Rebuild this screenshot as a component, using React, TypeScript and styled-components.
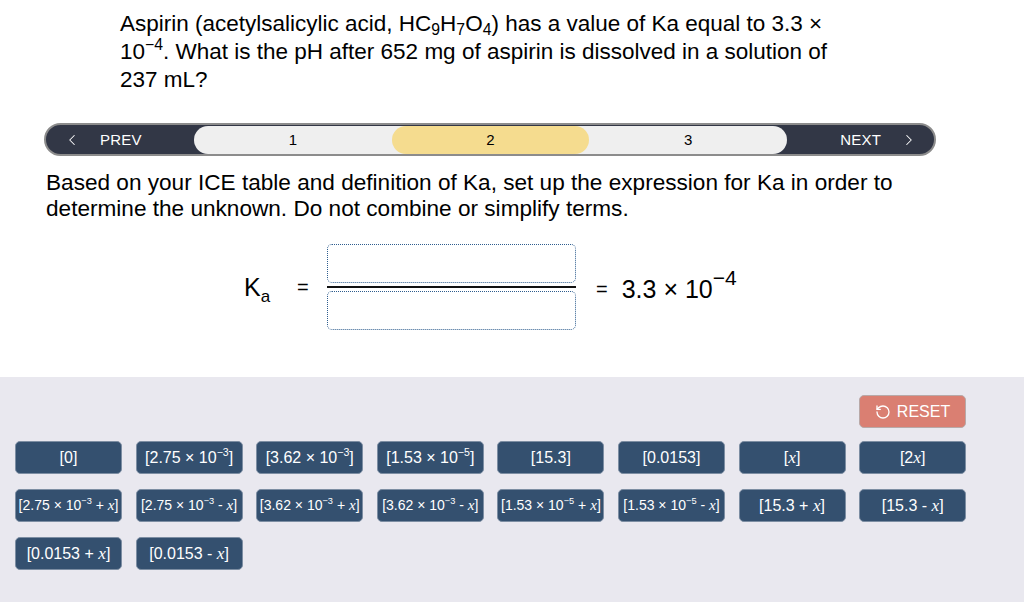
import React from "react";
import styled, { createGlobalStyle } from "styled-components";
import { ChevronLeft, ChevronRight, RotateCcw } from "lucide-react";

const Global = createGlobalStyle`
  html, body { margin: 0; padding: 0; background: #fff; }
  body { font-family: "Liberation Sans", Arial, sans-serif; color: #000; }
  #root { min-height: 602px; }
`;

const Page = styled.div`
  width: 1024px;
  height: 602px;
  display: flex;
  flex-direction: column;
  overflow: hidden;
`;

const Top = styled.div`
  flex: 0 0 377px;
  display: flex;
  flex-direction: column;
`;

const Question = styled.div`
  margin: 10px 0 0 120px;
  width: 722px;
  font-size: 22.5px;
  line-height: 28px;
`;

const Sub = styled.sub`
  font-size: 0.7em;
  vertical-align: -0.25em;
  line-height: 0;
`;

const Sup = styled.sup<{ $size?: number; $raise?: number }>`
  font-size: ${(p) => (p.$size ? `${p.$size}em` : "0.7em")};
  vertical-align: ${(p) => (p.$raise ? `${p.$raise}em` : "0.6em")};
  line-height: 0;
`;

const NavBar = styled.div`
  margin: 29px 0 0 44px;
  width: 892px;
  height: 33px;
  box-sizing: border-box;
  border: 2px solid #8c8c8c;
  border-radius: 17px;
  background: #323746;
  display: flex;
  align-items: center;
  color: #fff;
  font-family: "Liberation Sans", Arial, sans-serif;
  font-size: 15px;
`;

const NavButton = styled.div<{ $side: "prev" | "next" }>`
  flex: 0 0 ${(p) => (p.$side === "prev" ? 148 : 147)}px;
  display: flex;
  align-items: center;
  justify-content: ${(p) => (p.$side === "prev" ? "flex-start" : "flex-end")};
  gap: 19px;
  padding: ${(p) => (p.$side === "prev" ? "0 0 0 17px" : "0 16px 0 0")};
  box-sizing: border-box;
  letter-spacing: 0.2px;
`;

const Track = styled.div`
  flex: 0 0 593px;
  height: 28px;
  border-radius: 14px;
  background: #efefef;
  display: flex;
`;

const Step = styled.div<{ $active?: boolean }>`
  flex: 1;
  display: flex;
  align-items: center;
  justify-content: center;
  border-radius: 14px;
  background: ${(p) => (p.$active ? "#f5dc8f" : "transparent")};
  color: #000;
  font-size: 15px;
`;

const Instruction = styled.div`
  margin: 14px 0 0 46px;
  width: 900px;
  font-size: 22.6px;
  line-height: 26px;
`;

const Equation = styled.div`
  margin: 22px 0 0 244px;
  display: flex;
  align-items: center;
`;

const KLabel = styled.span`
  font-size: 25px;
  width: 53px;
`;

const KSub = styled.sub`
  font-size: 17px;
  vertical-align: -0.35em;
  line-height: 0;
`;

const Eq = styled.span`
  width: 30px;
  font-size: 20px;
`;

const Fraction = styled.div`
  display: flex;
  flex-direction: column;
  align-items: stretch;
  width: 249px;
  gap: 3px;
`;

const DropBox = styled.div`
  height: 39px;
  box-sizing: border-box;
  border: 1px dotted #2e5d8e;
  border-radius: 5px;
`;

const Bar = styled.div`
  height: 2px;
  background: #111;
`;

const Result = styled.span`
  margin-left: 20px;
  font-size: 25px;
  display: flex;
  align-items: center;
  gap: 14px;
  padding-top: 4px;
`;

const ResultEq = styled.span`
  font-size: 20px;
`;

const Panel = styled.div`
  flex: 1;
  background: #e9e8ef;
  padding: 18px 0 0 15px;
  display: flex;
  flex-direction: column;
`;

const ResetRow = styled.div`
  width: 951px;
  display: flex;
  justify-content: flex-end;
  margin-bottom: 13px;
`;

const ResetButton = styled.button`
  width: 107px;
  height: 33px;
  box-sizing: border-box;
  border: 1px solid #b8a9a8;
  border-radius: 5px;
  background: #da7f72;
  color: #fff;
  font-family: "Liberation Sans", Arial, sans-serif;
  font-size: 16px;
  display: flex;
  align-items: center;
  justify-content: center;
  gap: 6px;
  padding: 0;
`;

const Grid = styled.div`
  display: grid;
  grid-template-columns: repeat(8, 107px);
  column-gap: 13.6px;
  row-gap: 15px;
`;

const Tile = styled.button<{ $size: number }>`
  height: 33px;
  box-sizing: border-box;
  border: 1px solid #7d8ea3;
  border-radius: 5px;
  background: #34506f;
  color: #fff;
  font-family: "Liberation Sans", Arial, sans-serif;
  font-size: ${(p) => p.$size}px;
  display: flex;
  align-items: center;
  justify-content: center;
  padding: 0;
  white-space: nowrap;
`;

const TileText = styled.span`
  white-space: pre;
`;

const X = styled.i`
  font-family: "Liberation Serif", "Times New Roman", serif;
  font-style: italic;
  font-size: 1.08em;
`;

type T = { content: React.ReactNode; size: number };

const sci = (m: string, e: string) => (
  <>
    {m} × 10<Sup $size={0.66} $raise={0.7}>{e}</Sup>
  </>
);

const tiles: T[] = [
  { content: <>[0]</>, size: 16 },
  { content: <>[{sci("2.75", "−3")}]</>, size: 16 },
  { content: <>[{sci("3.62", "−3")}]</>, size: 16 },
  { content: <>[{sci("1.53", "−5")}]</>, size: 16 },
  { content: <>[15.3]</>, size: 16 },
  { content: <>[0.0153]</>, size: 16 },
  { content: <>[<X>x</X>]</>, size: 16 },
  { content: <>[2<X>x</X>]</>, size: 16 },
  { content: <>[{sci("2.75", "−3")}{" + "}<X>x</X>]</>, size: 14 },
  { content: <>[{sci("2.75", "−3")}{" - "}<X>x</X>]</>, size: 14 },
  { content: <>[{sci("3.62", "−3")}{" + "}<X>x</X>]</>, size: 14 },
  { content: <>[{sci("3.62", "−3")}{" - "}<X>x</X>]</>, size: 14 },
  { content: <>[{sci("1.53", "−5")}{" + "}<X>x</X>]</>, size: 14 },
  { content: <>[{sci("1.53", "−5")}{" - "}<X>x</X>]</>, size: 14 },
  { content: <>[15.3{" + "}<X>x</X>]</>, size: 16 },
  { content: <>[15.3{" - "}<X>x</X>]</>, size: 16 },
  { content: <>[0.0153{" + "}<X>x</X>]</>, size: 16 },
  { content: <>[0.0153{" - "}<X>x</X>]</>, size: 16 },
];

export default function App() {
  return (
    <>
      <Global />
      <Page>
        <Top>
          <Question>
            Aspirin (acetylsalicylic acid, HC<Sub>9</Sub>H<Sub>7</Sub>O<Sub>4</Sub>) has a value of Ka equal to 3.3 ×
            10<Sup>−4</Sup>. What is the pH after 652 mg of aspirin is dissolved in a solution of 237 mL?
          </Question>
          <NavBar>
            <NavButton $side="prev">
              <ChevronLeft size={18} strokeWidth={1.4} />
              <span>PREV</span>
            </NavButton>
            <Track>
              <Step>1</Step>
              <Step $active>2</Step>
              <Step>3</Step>
            </Track>
            <NavButton $side="next">
              <span>NEXT</span>
              <ChevronRight size={18} strokeWidth={1.4} />
            </NavButton>
          </NavBar>
          <Instruction>
            Based on your ICE table and definition of Ka, set up the expression for Ka in order to determine the
            unknown. Do not combine or simplify terms.
          </Instruction>
          <Equation>
            <KLabel>
              K<KSub>a</KSub>
            </KLabel>
            <Eq>=</Eq>
            <Fraction>
              <DropBox />
              <Bar />
              <DropBox />
            </Fraction>
            <Result>
              <ResultEq>=</ResultEq>
              <span>
                3.3 × 10<Sup $size={0.84} $raise={0.6}>−4</Sup>
              </span>
            </Result>
          </Equation>
        </Top>
        <Panel>
          <ResetRow>
            <ResetButton>
              <RotateCcw size={16} strokeWidth={2} />
              RESET
            </ResetButton>
          </ResetRow>
          <Grid>
            {tiles.map((t, i) => (
              <Tile key={i} $size={t.size}>
                <TileText>{t.content}</TileText>
              </Tile>
            ))}
          </Grid>
        </Panel>
      </Page>
    </>
  );
}
